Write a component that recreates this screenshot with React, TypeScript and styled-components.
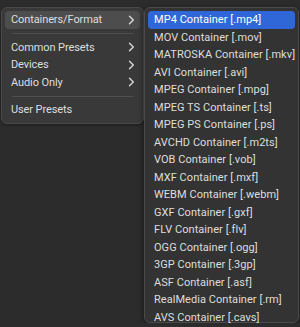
import styled, { createGlobalStyle } from "styled-components";

const GlobalStyle = createGlobalStyle`
  html, body {
    margin: 0;
    padding: 0;
    background: #2c2c2c;
    overflow: hidden;
  }
  body {
    font-family: Roboto, Inter, "Noto Sans", "Liberation Sans", sans-serif;
    -webkit-font-smoothing: antialiased;
  }
`;

const mainItems: { label?: string; sub?: boolean; active?: boolean; sep?: boolean }[] = [
  { label: "Containers/Format", sub: true, active: true },
  { sep: true },
  { label: "Common Presets", sub: true },
  { label: "Devices", sub: true },
  { label: "Audio Only", sub: true },
  { sep: true },
  { label: "User Presets" },
];

const formats = [
  "MP4 Container [.mp4]",
  "MOV Container [.mov]",
  "MATROSKA Container [.mkv]",
  "AVI Container [.avi]",
  "MPEG Container [.mpg]",
  "MPEG TS Container [.ts]",
  "MPEG PS Container [.ps]",
  "AVCHD Container [.m2ts]",
  "VOB Container [.vob]",
  "MXF Container [.mxf]",
  "WEBM Container [.webm]",
  "GXF Container [.gxf]",
  "FLV Container [.flv]",
  "OGG Container [.ogg]",
  "3GP Container [.3gp]",
  "ASF Container [.asf]",
  "RealMedia Container [.rm]",
  "AVS Container [.cavs]",
];

const Chevron = () => (
  <svg width="7" height="10" viewBox="0 0 7 10">
    <path d="M1.5 1.2 L5.3 5 L1.5 8.8" fill="none" stroke="#d8d8d8" strokeWidth="1.4" strokeLinecap="round" strokeLinejoin="round" />
  </svg>
);

export default function App() {
  return (
    <>
      <GlobalStyle />
      <Stage>
        <Menu>
          {mainItems.map((item, i) =>
            item.sep ? (
              <Separator key={i} />
            ) : (
              <MainRow key={i} $active={item.active}>
                <span>{item.label}</span>
                {item.sub && <Chevron />}
              </MainRow>
            )
          )}
        </Menu>
        <SubMenu>
          {formats.map((f, i) => (
            <SubRow key={f} $selected={i === 0}>
              {f}
            </SubRow>
          ))}
        </SubMenu>
      </Stage>
    </>
  );
}

const Stage = styled.div`
  display: flex;
  align-items: flex-start;
  padding: 7px 0 0 1px;
`;

const Menu = styled.div`
  width: 143px;
  box-sizing: border-box;
  padding: 3px 3px 4px;
  background: #393939;
  border: 1px solid #4a4a4a;
  border-radius: 6px;
  display: flex;
  flex-direction: column;
  box-shadow: 0 1px 3px rgba(0, 0, 0, 0.4);
`;

const MainRow = styled.div<{ $active?: boolean }>`
  height: 17.5px;
  display: flex;
  align-items: center;
  justify-content: space-between;
  padding: 0 5px 0 6px;
  border-radius: 4px;
  font-size: 11px;
  letter-spacing: -0.1px;
  color: #dedede;
  background: ${(p) => (p.$active ? "#4d4d4d" : "transparent")};
`;

const Separator = styled.div`
  height: 1px;
  margin: 4.5px 7px;
  background: #4e4e4e;
`;

const SubMenu = styled.div`
  width: 155px;
  height: 316px;
  box-sizing: border-box;
  padding: 3px 3px;
  background: #333333;
  border: 1px solid #4a4a4a;
  border-radius: 6px;
  display: flex;
  flex-direction: column;
  box-shadow: 0 2px 6px rgba(0, 0, 0, 0.5);
`;

const SubRow = styled.div<{ $selected?: boolean }>`
  height: 17.5px;
  flex: none;
  display: flex;
  align-items: center;
  padding: 0 6px;
  border-radius: 4px;
  font-size: 11px;
  letter-spacing: 0.05px;
  white-space: nowrap;
  color: ${(p) => (p.$selected ? "#ffffff" : "#dedede")};
  background: ${(p) => (p.$selected ? "#2f67d8" : "transparent")};
`;
